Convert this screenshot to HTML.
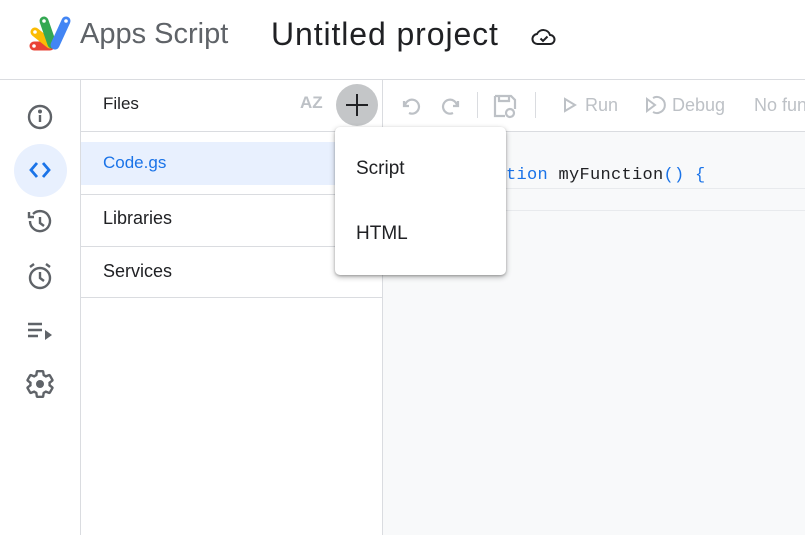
<!DOCTYPE html>
<html><head><style>
*{margin:0;padding:0;box-sizing:border-box}
body{width:805px;height:535px;overflow:hidden;background:#fff;font-family:"Liberation Sans",sans-serif;position:relative;color:#3c4043}
.a{position:absolute}
</style></head><body>
<!-- header -->
<svg class="a" style="left:28px;top:14px" width="46" height="40" viewBox="0 0 46 40">
<g stroke-linecap="round" fill="none" stroke-width="9">
<line x1="6" y1="32" x2="22" y2="32" stroke="#ea4335"/>
<line x1="7" y1="18" x2="22" y2="30" stroke="#fbbc04"/>
<line x1="16" y1="7" x2="24" y2="30" stroke="#34a853"/>
<line x1="38" y1="7" x2="27" y2="31" stroke="#4285f4"/>
</g>
<g fill="#fff"><circle cx="6" cy="32" r="1.8"/><circle cx="7" cy="18" r="1.8"/><circle cx="16" cy="7" r="1.8"/><circle cx="38" cy="7" r="1.8"/></g>
</svg>
<div class="a" style="left:80px;top:18px;font-size:29px;color:#5f6368">Apps Script</div>
<div class="a" style="left:271px;top:16px;font-size:32px;letter-spacing:0.9px;color:#202124">Untitled project</div>
<svg class="a" style="left:531px;top:26px" width="26" height="22" viewBox="0 0 26 22"><path d="M7 18h12a4.5 4.5 0 0 0 0-9 7 7 0 0 0-13-1 5 5 0 0 0 1 10z" fill="none" stroke="#202124" stroke-width="2"/><path d="M9.5 12.5l2.5 2.5 4.5-4.5" fill="none" stroke="#202124" stroke-width="2"/></svg>
<div class="a" style="left:0;top:79px;width:805px;height:1px;background:#dadce0"></div>
<!-- rail -->
<div class="a" style="left:80px;top:80px;width:1px;height:455px;background:#dadce0"></div>
<div class="a" style="left:14px;top:144px;width:53px;height:53px;border-radius:50%;background:#e8f0fe"></div>
<svg class="a" style="left:26px;top:104px" width="28" height="260" viewBox="0 0 28 260" fill="none" stroke="#5f6368" stroke-width="2.4">
<circle cx="14" cy="13" r="11"/><line x1="14" y1="11" x2="14" y2="18"/><circle cx="14" cy="7.5" r="0.8" fill="#5f6368"/>
<path d="M11 59l-6 7 6 7M17 59l6 7-6 7" stroke="#1a73e8" stroke-width="2.8"/>
<path d="M4 117a10 10 0 1 0 3-7" /><path d="M3 108v5h5"/><path d="M14 113v6l4 3"/>
<circle cx="14" cy="174" r="10"/><path d="M14 168v6l4 3M4 163l4-3M24 163l-4-3"/>
<path d="M2 220h14M2 226h14M2 232h10" /><path d="M19 226l7 5-7 5z" fill="#5f6368" stroke="none"/>
</svg>
<svg class="a" style="left:24px;top:368px" width="32" height="32" viewBox="0 0 24 24">
<path d="M19.14 12.94c.04-.3.06-.61.06-.94 0-.32-.02-.64-.07-.94l2.03-1.58c.18-.14.23-.41.12-.61l-1.92-3.32c-.12-.22-.37-.29-.59-.22l-2.39.96c-.5-.38-1.03-.7-1.62-.94l-.36-2.54c-.04-.24-.24-.41-.48-.41h-3.84c-.24 0-.43.17-.47.41l-.36 2.54c-.59.24-1.13.57-1.62.94l-2.39-.96c-.22-.08-.47 0-.59.22L2.740 8.87c-.12.21-.08.47.12.61l2.03 1.58c-.05.3-.09.63-.09.94s.02.64.07.94l-2.03 1.58c-.18.14-.23.41-.12.61l1.92 3.32c.12.22.37.29.59.22l2.39-.96c.5.38 1.03.7 1.62.94l.36 2.54c.05.24.24.41.48.41h3.84c.24 0 .44-.17.47-.41l.36-2.54c.59-.24 1.130-.56 1.62-.94l2.39.96c.22.08.47 0 .59-.22l1.92-3.32c.12-.22.07-.47-.12-.61l-2.01-1.58z" fill="none" stroke="#5f6368" stroke-width="1.8" stroke-linejoin="round"/>
<circle cx="12" cy="12" r="3" fill="#5f6368"/>
</svg>
<!-- files panel -->
<div class="a" style="left:103px;top:94px;font-size:17px;color:#202124">Files</div>
<div class="a" style="left:300px;top:93px;font-size:17px;font-weight:bold;color:#bdc1c6">AZ</div>
<div class="a" style="left:336px;top:84px;width:42px;height:42px;border-radius:50%;background:#c4c6c8"></div>
<div class="a" style="left:346px;top:104px;width:22px;height:2px;background:#202124"></div>
<div class="a" style="left:356px;top:94px;width:2px;height:22px;background:#202124"></div>
<div class="a" style="left:81px;top:131px;width:301px;height:1px;background:#dadce0"></div>
<div class="a" style="left:81px;top:142px;width:260px;height:43px;background:#e8f0fe"></div>
<div class="a" style="left:103px;top:153px;font-size:17px;color:#1a73e8">Code.gs</div>
<div class="a" style="left:81px;top:194px;width:301px;height:1px;background:#dadce0"></div>
<div class="a" style="left:103px;top:208px;font-size:18px;color:#202124">Libraries</div>
<div class="a" style="left:81px;top:246px;width:301px;height:1px;background:#dadce0"></div>
<div class="a" style="left:103px;top:261px;font-size:18px;color:#202124">Services</div>
<div class="a" style="left:81px;top:297px;width:301px;height:1px;background:#dadce0"></div>
<div class="a" style="left:382px;top:80px;width:1px;height:455px;background:#dadce0"></div>
<!-- toolbar -->
<svg class="a" style="left:400px;top:94px" width="70" height="24" viewBox="0 0 70 24" fill="none" stroke="#bdc1c6" stroke-width="2.2"><path d="M4 7v5h5M5 12a7 7 0 1 1 4 7"/><path d="M58 7v5h-5M57 12a7 7 0 1 0-4 7"/></svg>
<div class="a" style="left:477px;top:92px;width:1px;height:26px;background:#dadce0"></div>
<svg class="a" style="left:491px;top:92px" width="28" height="28" viewBox="0 0 28 28" fill="none" stroke="#bdc1c6" stroke-width="2.2"><path d="M4 4h16l4 4v9M4 4v20h10"/><path d="M8 4v5h10V4"/><circle cx="19" cy="21" r="4"/></svg>
<div class="a" style="left:535px;top:92px;width:1px;height:26px;background:#dadce0"></div>
<svg class="a" style="left:562px;top:97px" width="16" height="16"><path d="M3 2l10 6-10 6z" fill="none" stroke="#bdc1c6" stroke-width="2"/></svg>
<div class="a" style="left:585px;top:95px;font-size:18px;color:#bdc1c6">Run</div>
<svg class="a" style="left:645px;top:95px" width="22" height="20" fill="none" stroke="#bdc1c6" stroke-width="2"><path d="M2 4l8 6-8 6z"/><path d="M8 3a8 8 0 1 1 0 14"/></svg>
<div class="a" style="left:672px;top:95px;font-size:18px;color:#bdc1c6">Debug</div>
<div class="a" style="left:754px;top:90px;width:51px;height:30px;overflow:hidden"><div style="margin-top:5px;font-size:18px;color:#bdc1c6;white-space:nowrap">No functions</div></div>
<div class="a" style="left:383px;top:131px;width:422px;height:1px;background:#dadce0"></div>
<!-- editor -->
<div class="a" style="left:383px;top:132px;width:422px;height:403px;background:#f8f9fa"></div>
<div class="a" style="left:383px;top:188px;width:422px;height:1px;background:#e8eaed"></div>
<div class="a" style="left:383px;top:210px;width:422px;height:1px;background:#e8eaed"></div>
<div class="a" style="left:464px;top:166px;font-family:'Liberation Mono',monospace;font-size:17px;letter-spacing:0.3px;color:#202124;white-space:pre"><span style="color:#1a73e8">function</span> myFunction<span style="color:#1a73e8">() {</span></div>
<!-- menu -->
<div class="a" style="left:335px;top:127px;width:171px;height:148px;background:#fff;border-radius:5px;box-shadow:0 2px 6px rgba(0,0,0,.3),0 1px 2px rgba(0,0,0,.2)"></div>
<div class="a" style="left:356px;top:158px;font-size:19px;color:#202124">Script</div>
<div class="a" style="left:356px;top:223px;font-size:19px;color:#202124">HTML</div>
</body></html>
